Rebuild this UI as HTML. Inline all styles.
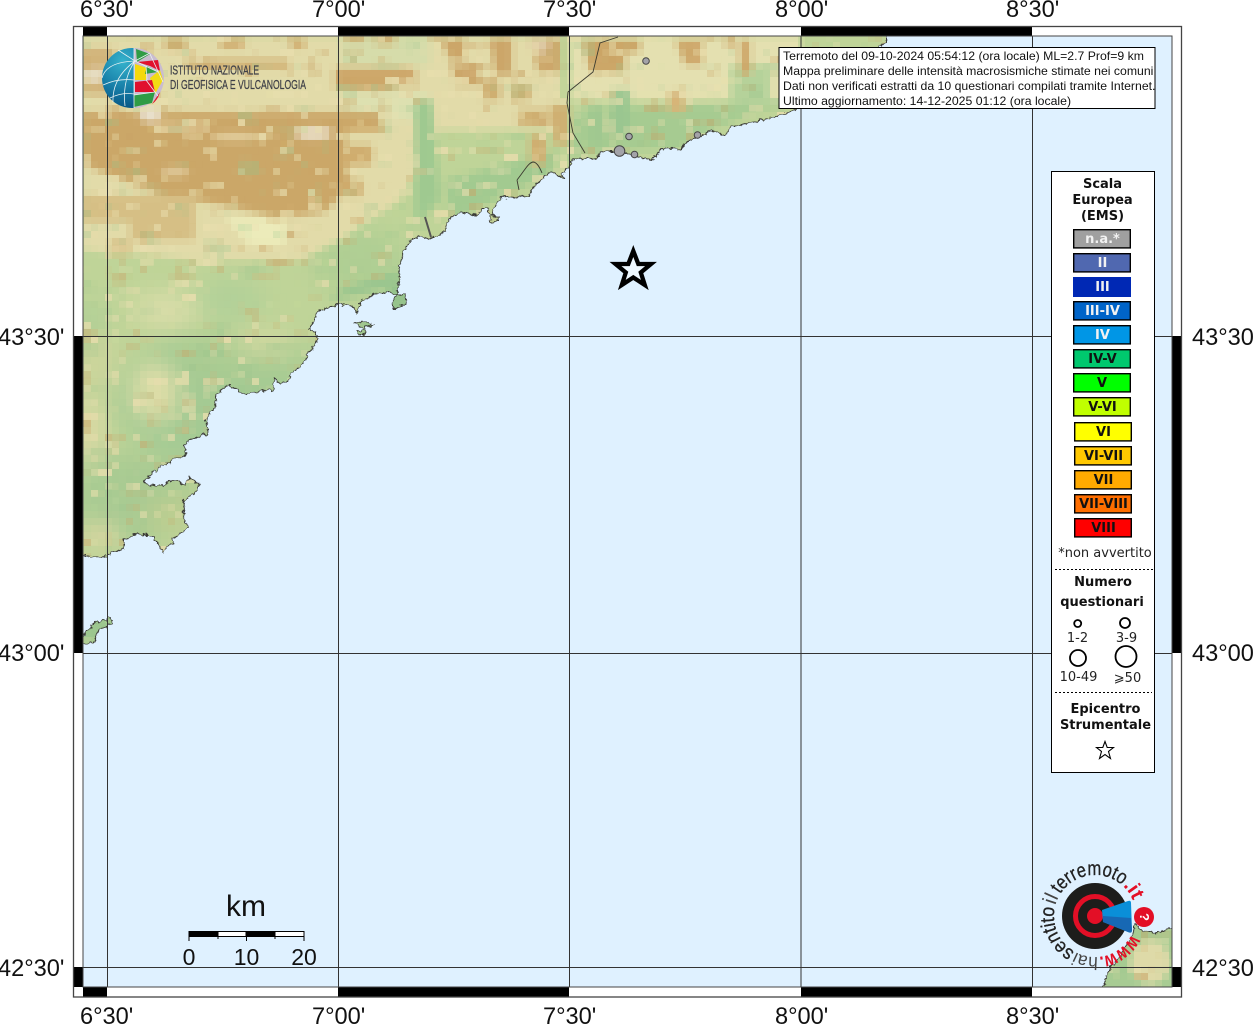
<!DOCTYPE html>
<html lang="it"><head><meta charset="utf-8"><title>Mappa</title>
<style>html,body{margin:0;padding:0;background:#fff;width:1255px;height:1024px;overflow:hidden}svg{display:block}
.a{font:23.6px "Liberation Sans",sans-serif;fill:#111}
.b{font:bold 13px "DejaVu Sans",sans-serif;text-anchor:middle;fill:#111}
.n{font:13px "DejaVu Sans",sans-serif;text-anchor:middle;fill:#222}
.t{font:12.25px "Liberation Sans",sans-serif;fill:#111}
.w{fill:#f2f2f2}
</style></head><body>
<svg width="1255" height="1024" viewBox="0 0 1255 1024" xmlns="http://www.w3.org/2000/svg">
<defs>
<filter id="px" filterUnits="userSpaceOnUse" x="0" y="0" width="1255" height="1024" color-interpolation-filters="sRGB">
<feFlood x="3" y="3" width="1" height="1" flood-color="#000"/><feComposite width="7" height="7"/><feTile result="a"/>
<feComposite in="SourceGraphic" in2="a" operator="in"/><feMorphology operator="dilate" radius="3"/></filter>
<filter id="bl" filterUnits="userSpaceOnUse" x="0" y="0" width="1255" height="1024" color-interpolation-filters="sRGB"><feGaussianBlur stdDeviation="2.800"/></filter>
<filter id="bs" filterUnits="userSpaceOnUse" x="0" y="0" width="1255" height="1024" color-interpolation-filters="sRGB"><feGaussianBlur stdDeviation="11"/></filter>
<filter id="wig" filterUnits="userSpaceOnUse" x="0" y="0" width="1255" height="1024" color-interpolation-filters="sRGB"><feTurbulence baseFrequency="0.14" numOctaves="2" seed="7" result="t"/><feDisplacementMap in="SourceGraphic" in2="t" scale="5" xChannelSelector="R" yChannelSelector="G"/></filter>
<filter id="nz" filterUnits="userSpaceOnUse" x="0" y="0" width="1255" height="1024" color-interpolation-filters="sRGB"><feTurbulence baseFrequency="0.03 0.07" numOctaves="3" seed="4"/><feColorMatrix values="0 0 0 0 .79 0 0 0 0 .64 0 0 0 0 .4 3.500 0 0 0 -1.600"/></filter>
<filter id="nc" filterUnits="userSpaceOnUse" x="0" y="0" width="1255" height="1024" color-interpolation-filters="sRGB"><feTurbulence baseFrequency="0.04 0.09" numOctaves="3" seed="11"/><feColorMatrix values="0 0 0 0 .91 0 0 0 0 .87 0 0 0 0 .68 4 0 0 0 -1.900"/></filter>
<filter id="ng" filterUnits="userSpaceOnUse" x="0" y="0" width="1255" height="1024" color-interpolation-filters="sRGB"><feTurbulence baseFrequency="0.03 0.05" numOctaves="3" seed="23"/><feColorMatrix values="0 0 0 0 .6 0 0 0 0 .77 0 0 0 0 .55 4 0 0 0 -1.900"/></filter>
<radialGradient id="gb" cx="35%" cy="22%" r="85%"><stop offset="0" stop-color="#35b2cc"/><stop offset=".55" stop-color="#167ca6"/><stop offset="1" stop-color="#07507f"/></radialGradient>
<path id="cp" d="M80,554 L90,555 103,556 113,550 123,547 123,538 133,533 152,535 162,551 165,545 172,542 170,537 188,527 183,520 182,500 195,490 198,483 188,476 183,483 172,479 160,485 147,484 143,480 160,465 175,458 185,453 183,445 187,438 207,433 205,418 213,407 215,393 227,383 233,387 242,393 267,389 272,390 273,378 278,382 288,379 290,372 302,363 307,353 315,340 317,334 308,328 317,310 330,305 348,303 355,312 360,300 373,292 388,291 393,293 403,293 405,302 393,308 390,302 396,292 398,277 397,267 402,250 410,238 418,235 430,238 443,230 447,218 460,211 475,214 482,207 487,207 490,223 498,217 490,213 500,197 513,196 527,195 530,188 537,180 550,170 562,177 563,170 573,158 595,157 600,150 620,150 650,159 662,147 680,148 685,140 710,130 723,134 730,125 757,120 785,112 830,90 870,55 885,40 885,33 80,33Z M80,637 L93,622 110,617 111,623 98,627 93,640 85,643 80,642Z M353,322 L362,320 373,324 362,327Z M356,331 L363,329 365,333 358,334Z M1175,925 L1153,932 1142,930 1133,923 1130,937 1120,953 1105,973 1102,990 1175,990Z"/>
<mask id="land" maskUnits="userSpaceOnUse" x="0" y="0" width="1255" height="1024" style="mask-type:luminance"><use href="#cp" fill="#fff" filter="url(#wig)"/></mask>
</defs>
<rect width="1255" height="1024" fill="#fff"/>
<rect x="83" y="36" width="1089" height="951" fill="#dff1ff"/>
<g mask="url(#land)"><g filter="url(#px)">
<rect x="70" y="20" width="1120" height="980" fill="#bfd498"/>
<g filter="url(#bs)">
<ellipse cx="210" cy="400" rx="95" ry="65" fill="#a4ca93"/><ellipse cx="135" cy="500" rx="62" ry="45" fill="#a8ca92"/><ellipse cx="250" cy="355" rx="70" ry="22" fill="#abcc92"/><rect x="83" y="450" width="40" height="50" fill="#a9cb92"/>
<ellipse cx="155" cy="392" rx="24" ry="30" fill="#dedda8"/><ellipse cx="90" cy="430" rx="14" ry="32" fill="#dcd9a4"/><ellipse cx="170" cy="515" rx="26" ry="18" fill="#bccd90"/><ellipse cx="100" cy="535" rx="18" ry="14" fill="#d8d6a0"/><ellipse cx="265" cy="343" rx="32" ry="10" fill="#d6d9a2"/><rect x="83" y="336" width="30" height="50" fill="#cdd49c"/>
<ellipse cx="165" cy="310" rx="34" ry="18" fill="#d8dca8"/><ellipse cx="230" cy="300" rx="34" ry="22" fill="#b2d098"/><ellipse cx="360" cy="262" rx="45" ry="34" fill="#afce93"/><ellipse cx="90" cy="320" rx="16" ry="10" fill="#a8cc94"/>
</g>
<g filter="url(#bl)">
<path d="M83,36 H560 V130 H440 L400,200 340,240 300,260 200,260 83,250Z" fill="#e2dba9"/>
<path d="M570,36 H800 V100 H570Z" fill="#e4e0b0"/>
<rect x="340" y="36" width="90" height="30" fill="#d6dcaa"/><rect x="340" y="92" width="90" height="28" fill="#dde0b0"/>
<path d="M415,100 L432,100 440,200 415,225 Z" fill="#9fc990"/>
<path d="M445,180 L560,150 548,175 500,198 450,222Z" fill="#a2ca90"/>
<path d="M570,160 L575,110 790,100 710,130 680,148 600,152Z" fill="#a6cb91"/>
<rect x="612" y="90" width="18" height="45" fill="#9ac690"/><rect x="590" y="105" width="12" height="40" fill="#9fc890"/>
<rect x="730" y="65" width="40" height="40" fill="#b5d29a"/>
<path d="M83,112 H380 V132 H345 L350,185 325,212 280,218 235,208 165,195 83,165Z" fill="#cba768"/>
<path d="M83,48 H115 V95 H83Z" fill="#d2b47a"/>
<path d="M165,38 H185 V50 H165Z M220,38 H245 V48 H220Z M185,60 H290 V68 H185Z M125,55 H150 V65 H125Z M290,38 H305 V48 H290Z" fill="#cfab6c"/>
<path d="M335,68 H415 V85 H395 V90 H335Z M375,36 H395 V44 H375Z M345,36 H365 V42 H345Z" fill="#cda769"/>
<path d="M440,38 H465 V60 H450Z M450,65 H478 V85 H455Z M490,38 H512 V75 H495Z M530,38 H560 V72 H538Z" fill="#cca669"/>
<path d="M482,82 H500 V100 H482Z M512,85 H530 V100 H512Z M518,110 H548 V125 H518Z M530,135 H546 V165 H530Z M550,105 H568 V145 H555Z" fill="#cfae70"/>
<path d="M582,40 H640 V52 H625 V72 H590Z" fill="#cba566"/>
<path d="M675,40 H702 V65 H685Z M740,40 H750 V75 H740Z M725,38 H735 V46 H725Z" fill="#cea96b"/>
<path d="M670,92 H685 V112 H668Z" fill="#d6b477"/>
<path d="M340,125 H385 V132 H345Z M342,145 H372 V165 H342Z M345,180 H362 V196 H345Z" fill="#d0ad6e"/>
<path d="M83,195 H195 V240 H130 V222 H83Z M110,240 H130 V255 H110Z" fill="#d6bf85"/>
<path d="M225,218 H285 V245 H250Z" fill="#ecebba"/>
<ellipse cx="150" cy="115" rx="11" ry="7" fill="#e8dfcb"/><ellipse cx="313" cy="133" rx="20" ry="6" fill="#eae0c9"/><ellipse cx="235" cy="137" rx="25" ry="4" fill="#e2cd9c"/><ellipse cx="180" cy="126" rx="28" ry="4" fill="#e4cf9f"/><ellipse cx="540" cy="46" rx="10" ry="8" fill="#ddc8a2"/><ellipse cx="175" cy="172" rx="14" ry="5" fill="#ddc594"/>
<ellipse cx="95" cy="75" rx="12" ry="8" fill="#e6dcc0"/>
<ellipse cx="97" cy="628" rx="20" ry="14" fill="#9cc68f"/><rect x="350" y="318" width="28" height="18" fill="#9dc68e"/><rect x="1100" y="920" width="80" height="70" fill="#a6cb92"/><ellipse cx="1150" cy="962" rx="20" ry="22" fill="#dedaa8"/><rect x="388" y="285" width="22" height="25" fill="#95c28b"/>
<path d="M330,300 L400,285 398,270 340,290Z" fill="#9ac58e"/>
</g>
<rect x="83" y="36" width="720" height="70" filter="url(#nz)" opacity=".4"/>
<rect x="340" y="106" width="460" height="130" filter="url(#nz)" opacity=".3"/>
<rect x="83" y="36" width="720" height="70" filter="url(#nc)" opacity=".55"/>
<rect x="340" y="106" width="460" height="130" filter="url(#nc)" opacity=".55"/>
<rect x="83" y="106" width="257" height="130" filter="url(#nc)" opacity=".28"/>
<rect x="83" y="250" width="340" height="310" filter="url(#ng)" opacity=".35"/>
</g></g>
<use href="#cp" fill="none" stroke="#3a3a36" stroke-width="1" stroke-linejoin="round" filter="url(#wig)"/>
<path d="M618,37 L600,43 593,72 568,92 567,103 573,133 585,153 M517,180 L519,190 M517,180 C525,170 528,163 533,162 C537,162 540,168 542,173" fill="none" stroke="#3b3b30" stroke-width=".9"/>
<path d="M425,217 L431,237" fill="none" stroke="#555" stroke-width="2"/>
<!-- grid -->
<g stroke="#333" stroke-width="1" fill="none"><path d="M107.500,36V987 M338.500,36V987 M569.500,36V987 M801,36V987 M1032.500,36V987 M83,336.500H1172 M83,653.500H1172 M83,967.500H1172"/></g>
<!-- points -->
<g fill="#a3a3a8" stroke="#444" stroke-width="1"><circle cx="646" cy="61" r="3.300"/><circle cx="629" cy="136.500" r="3.300"/><circle cx="619.500" cy="151" r="5.300"/><circle cx="634.500" cy="154.500" r="3.300"/><circle cx="697.500" cy="135" r="3.300"/></g>
<path d="M633.300,251 L638.300,264 651,264 640.800,272.500 644.800,285 633.300,277.500 621.800,285 625.800,272.500 615.500,264 628.300,264Z" fill="#eef8ff" stroke="#000" stroke-width="4.300" stroke-linejoin="miter"/>
<!-- frame -->
<path fill-rule="evenodd" fill="#fff" d="M73,26H1182V997H73Z M83,36V987H1172V36Z"/>
<g fill="#000"><rect x="83" y="27" width="24" height="9"/><rect x="338" y="27" width="231" height="9"/><rect x="801" y="27" width="231" height="9"/>
<rect x="83" y="987" width="24" height="10"/><rect x="338" y="987" width="231" height="10"/><rect x="801" y="987" width="231" height="10"/>
<rect x="74" y="336" width="9" height="317"/><rect x="74" y="967" width="9" height="20"/><rect x="1172" y="336" width="9" height="317"/><rect x="1172" y="967" width="9" height="20"/></g>
<g fill="none" stroke="#444" stroke-width="1"><rect x="73.500" y="26.500" width="1108" height="970.500" stroke-width="1.300"/><rect x="83" y="36" width="1089" height="951"/></g>
<!-- axis labels -->
<g><text class="a" x="80" y="17">6°30'</text><text class="a" x="312" y="17">7°00'</text><text class="a" x="543" y="17">7°30'</text><text class="a" x="775" y="17">8°00'</text><text class="a" x="1006" y="17">8°30'</text>
<text class="a" x="80" y="1024">6°30'</text><text class="a" x="312" y="1024">7°00'</text><text class="a" x="543" y="1024">7°30'</text><text class="a" x="775" y="1024">8°00'</text><text class="a" x="1006" y="1024">8°30'</text>
<text class="a" x="-2" y="345">43°30'</text><text class="a" x="-2" y="661">43°00'</text><text class="a" x="-2" y="976">42°30'</text>
<text class="a" x="1192" y="345">43°30'</text><text class="a" x="1192" y="661">43°00'</text><text class="a" x="1192" y="976">42°30'</text></g>
<!-- info box -->
<rect x="779" y="47.500" width="376" height="61" fill="#fff" stroke="#000" stroke-width="1"/>
<text class="t" x="783" y="60">Terremoto del 09-10-2024 05:54:12 (ora locale) ML=2.7 Prof=9 km</text>
<text class="t" x="783" y="75">Mappa preliminare delle intensità macrosismiche stimate nei comuni</text>
<text class="t" x="783" y="90">Dati non verificati estratti da 10 questionari compilati tramite Internet.</text>
<text class="t" x="783" y="105">Ultimo aggiornamento: 14-12-2025 01:12 (ora locale)</text>
<!-- legend -->
<rect x="1051.500" y="171.500" width="103" height="601" fill="#fff" stroke="#000" stroke-width="1"/>
<text class="b" x="1102.500" y="188">Scala</text><text class="b" x="1102.500" y="204">Europea</text><text class="b" x="1102.500" y="220">(EMS)</text>
<g stroke="#000" stroke-width="1.400">
<rect x="1073.700" y="229.700" width="56.600" height="18.200" fill="#a0a0a0"/><rect x="1073.700" y="253.700" width="56.600" height="18.200" fill="#5068b0"/><rect x="1073" y="277" width="58" height="20" fill="#0028b4" stroke="none"/><rect x="1073.700" y="301.700" width="56.600" height="18.200" fill="#0064c8"/><rect x="1073.700" y="325.700" width="56.600" height="18.200" fill="#0096e6"/><rect x="1073.700" y="349.700" width="56.600" height="18.200" fill="#00c86e"/><rect x="1073.700" y="373.700" width="56.600" height="18.200" fill="#00ff00"/><rect x="1073.700" y="397.700" width="56.600" height="18.200" fill="#c0ff00"/>
<rect x="1074.700" y="422.700" width="56.600" height="18.200" fill="#ffff00"/><rect x="1074.700" y="446.700" width="56.600" height="18.200" fill="#ffc800"/><rect x="1074.700" y="470.700" width="56.600" height="18.200" fill="#ffaa00"/><rect x="1074.700" y="494.700" width="56.600" height="18.200" fill="#ff6e00"/><rect x="1074.700" y="518.700" width="56.600" height="18.200" fill="#ff0000"/></g>
<g><text class="b w" x="1102.500" y="243">n.a.*</text><text class="b w" x="1102.500" y="267">II</text><text class="b w" x="1102.500" y="291">III</text><text class="b w" x="1102.500" y="315">III-IV</text><text class="b w" x="1102.500" y="339">IV</text>
<text class="b" x="1102.500" y="363">IV-V</text><text class="b" x="1102" y="387">V</text><text class="b" x="1102.500" y="411">V-VI</text><text class="b" x="1103.500" y="436">VI</text><text class="b" x="1103.500" y="460">VI-VII</text><text class="b" x="1103.500" y="484">VII</text><text class="b" x="1103.500" y="508">VII-VIII</text><text class="b" x="1103.500" y="532">VIII</text></g>
<text class="n" x="1105" y="557">*non avvertito</text>
<path d="M1055,569.500H1153 M1055,692.500H1152" stroke="#000" stroke-width="1" stroke-dasharray="2 2"/>
<text class="b" x="1103" y="586">Numero</text><text class="b" x="1102" y="606">questionari</text>
<g fill="#fff" stroke="#000" stroke-width="1.800"><circle cx="1077.700" cy="623.500" r="3.500"/><circle cx="1125" cy="623" r="5"/><circle cx="1078" cy="658" r="8"/><circle cx="1126" cy="656.500" r="10.500"/></g>
<text class="n" x="1077.500" y="642">1-2</text><text class="n" x="1126.500" y="642">3-9</text><text class="n" x="1078.500" y="681">10-49</text><text class="n" x="1127.500" y="682">⩾50</text>
<text class="b" x="1105.500" y="713">Epicentro</text><text class="b" x="1105.500" y="729">Strumentale</text>
<path d="M1105,741.500 L1107.200,747.500 1113.500,747.500 1108.500,751.500 1110.500,758.500 1105,754.500 1099.500,758.500 1101.500,751.500 1096.500,747.500 1102.800,747.500Z" fill="#fff" stroke="#000" stroke-width="1.100"/>
<!-- scale -->
<g><rect x="189" y="931" width="29" height="6" fill="#000"/><rect x="218" y="931.500" width="28" height="5" fill="#fff" stroke="#000"/><rect x="246" y="931" width="29" height="6" fill="#000"/><rect x="275" y="931.500" width="29" height="5" fill="#fff" stroke="#000"/>
<path d="M189,931V941 M246.500,931V941 M304,931V941 M218,936V939 M275,936V939" stroke="#000" stroke-width="1"/></g>
<text x="246" y="916" font-family="Liberation Sans" font-size="30" text-anchor="middle" fill="#111">km</text>
<g font-family="Liberation Sans" font-size="23" text-anchor="middle" fill="#111"><text x="189" y="965">0</text><text x="246.500" y="965">10</text><text x="304" y="965">20</text></g>
<!-- haisentito logo -->
<circle cx="1095" cy="916" r="33" fill="#1d1d1b"/><circle cx="1095" cy="916" r="19.500" fill="none" stroke="#e30f26" stroke-width="5"/><circle cx="1095" cy="916" r="8" fill="#e30f26"/>
<path d="M1102,910 L1128,901 Q1131,900 1131,903 L1132,930 Q1132,934 1128,932 L1103,922Z" fill="#0a8fd8"/><path d="M1103,916 L1131,918 1132,930 Q1132,934 1128,932 L1103,922Z" fill="#1768b4"/>
<circle cx="1144" cy="917" r="10" fill="#e30f26"/><text x="1144" y="921" font-family="Liberation Sans" font-weight="bold" font-size="13" text-anchor="middle" fill="#fff" transform="rotate(90 1144 917)">?</text>
<path id="arc" d="M1131.500,934.600 A41,41 0 1 1 1132.700,900" fill="none"/>
<g font-family="Liberation Sans" font-size="20" fill="#222">
<text fill="#e30f26" font-weight="bold"><textPath href="#arc" startOffset="0" textLength="41" lengthAdjust="spacingAndGlyphs">www.</textPath></text>
<text fill="#444" font-size="18"><textPath href="#arc" startOffset="42" textLength="23" lengthAdjust="spacingAndGlyphs">hai</textPath></text>
<text stroke="#222" stroke-width=".3"><textPath href="#arc" startOffset="66" textLength="52" lengthAdjust="spacingAndGlyphs">sentito</textPath></text>
<text fill="#444"><textPath href="#arc" startOffset="120" textLength="9" lengthAdjust="spacingAndGlyphs">il</textPath></text>
<text stroke="#222" stroke-width=".3"><textPath href="#arc" startOffset="132" textLength="71" lengthAdjust="spacingAndGlyphs">terremoto</textPath></text>
<text fill="#e30f26" font-weight="bold"><textPath href="#arc" startOffset="204" textLength="18" lengthAdjust="spacingAndGlyphs">.it</textPath></text>
</g>
<!-- INGV logo -->
<circle cx="132" cy="78" r="30" fill="url(#gb)"/>
<path d="M134,48 A30,30 0 0 1 134,108Z" fill="#c9bcd0"/>
<path d="M136,49 L150,54 137,62Z" fill="#2f9c46"/><path d="M137,62 L158,60 160,71 150,66Z" fill="#e1112e"/><path d="M135,64 L147,68 146,80 135,80Z" fill="#f4d90c"/><path d="M147,66 L158,72 145,74Z" fill="#2f9c46"/><path d="M150,78 L160,70 163,80 155,94Z" fill="#f2dc14"/><path d="M135,82 L152,80 155,92 135,92Z" fill="#e1112e"/><path d="M134,95 L155,92 152,103 134,107Z" fill="#2f9c46"/><path d="M160,92 L156,98 152,104 Q158,100 160,92Z" fill="#e1112e"/>
<g fill="none" stroke="#e9f2f3" stroke-width=".8"><path d="M134,48 L134,108 M135,61 L118,50 M135,61 Q106,62 102,78 M135,61 Q112,78 113,102 M135,61 Q122,80 125,106 M135,61 L150,53 M103,85 Q118,78 134,80 M110,98 Q122,92 134,94 M135,61 L158,72 M146,66 L147,80 M146,80 L158,96 M150,54 L163,82 M155,92 L134,95"/></g>
<text x="170" y="74.500" font-family="Liberation Sans" font-size="13" fill="#3f4048" stroke="#3f4048" stroke-width=".25" textLength="89" lengthAdjust="spacingAndGlyphs">ISTITUTO NAZIONALE</text>
<text x="170" y="89" font-family="Liberation Sans" font-size="13" fill="#3f4048" stroke="#3f4048" stroke-width=".25" textLength="136" lengthAdjust="spacingAndGlyphs">DI GEOFISICA E VULCANOLOGIA</text>
</svg>
</body></html>
